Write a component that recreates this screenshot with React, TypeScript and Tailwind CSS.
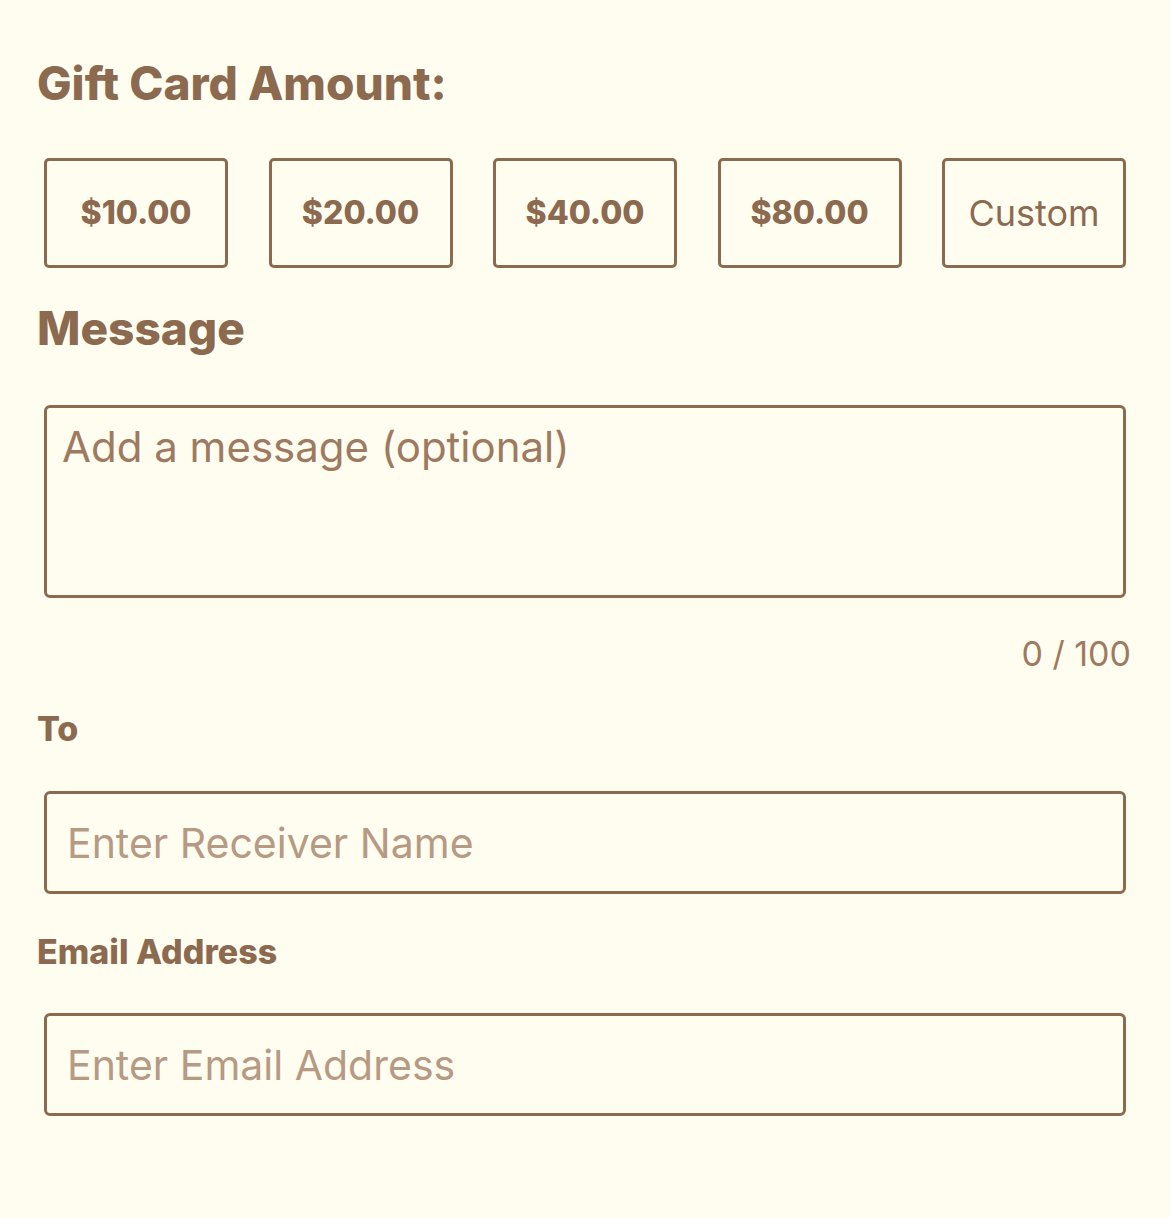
import { useState } from 'react';

const amounts = ['$10.00', '$20.00', '$40.00', '$80.00'];

export default function App() {
  const [message, setMessage] = useState('');

  return (
    <div
      className="min-h-[1218px] w-full bg-[#fffdf0] px-[37px] pt-[60px] text-[#8b6a50]"
      style={{ fontFamily: 'Inter, "Noto Sans", sans-serif' }}
    >
      {/* Amount */}
      <h2 className="text-[46px] font-extrabold leading-none">Gift Card Amount:</h2>
      <div className="mx-[7px] mt-[52px] flex justify-between">
        {amounts.map((a) => (
          <button
            key={a}
            className="flex h-[110px] w-[184px] items-center justify-center rounded-[5px] border-[3px] border-[#8b6a50] text-[32px] font-extrabold"
          >
            {a}
          </button>
        ))}
        <button className="flex h-[110px] w-[184px] items-center justify-center rounded-[5px] border-[3px] border-[#8b6a50] text-[36px] font-normal">
          Custom
        </button>
      </div>

      {/* Message */}
      <h2 className="mt-[37px] text-[46px] font-extrabold leading-none">Message</h2>
      <div className="mx-[7px] mt-[54px]">
        <textarea
          value={message}
          onChange={(e) => setMessage(e.target.value)}
          placeholder="Add a message (optional)"
          className="block h-[193px] w-full resize-none rounded-[6px] border-[3px] border-[#8b6a50] bg-transparent px-[15px] pt-[14px] text-[42px] leading-[1.2] outline-none placeholder:text-[#9d7a60]"
        />
      </div>
      <div className="mt-[39px] pr-[2px] text-right text-[34px] leading-none text-[#9d7a60]">0 / 100</div>

      {/* To */}
      <label className="mt-[41px] block text-[34px] font-extrabold leading-none">To</label>
      <div className="mx-[7px] mt-[45px]">
        <input
          placeholder="Enter Receiver Name"
          className="block h-[103px] w-full rounded-[6px] border-[3px] border-[#8b6a50] bg-transparent px-[20px] text-[41px] outline-none placeholder:text-[#b69a84]"
        />
      </div>

      {/* Email */}
      <label className="mt-[41px] block text-[34px] font-extrabold leading-none">Email Address</label>
      <div className="mx-[7px] mt-[44px]">
        <input
          placeholder="Enter Email Address"
          className="block h-[103px] w-full rounded-[6px] border-[3px] border-[#8b6a50] bg-transparent px-[20px] text-[41px] outline-none placeholder:text-[#b69a84]"
        />
      </div>
    </div>
  );
}
